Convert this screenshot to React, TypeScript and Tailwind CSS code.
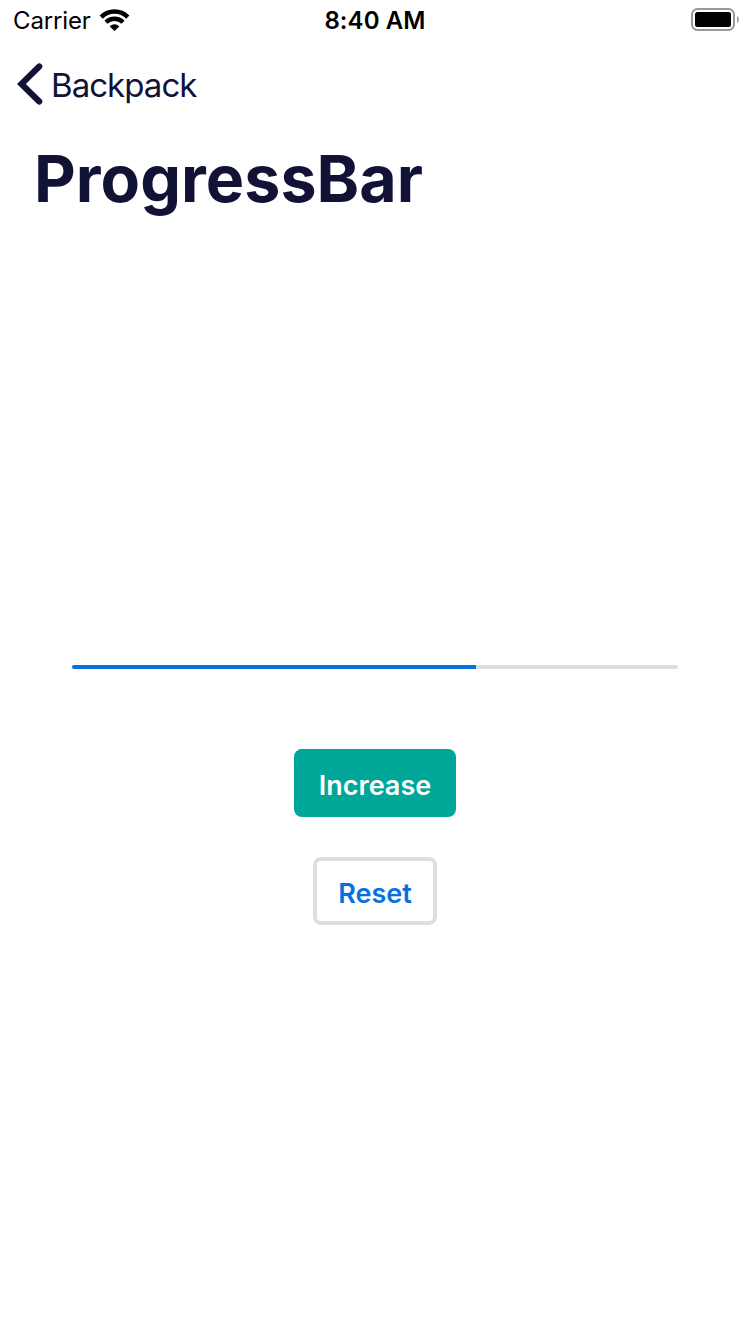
import { useState } from 'react';

function WifiIcon() {
  return (
    <svg className="ml-[8px] h-[24px] w-[32px]" viewBox="0 0 32 24" fill="none" stroke="#000">
      <path d="M2.200 9.100a18.700 18.700 0 0 1 26.600 0" strokeWidth="4.600" />
      <path d="M7 14.300a12 12 0 0 1 17 0" strokeWidth="4.400" />
      <path d="M15.500 23l-4.800-4.600a6.600 6.600 0 0 1 9.600 0z" fill="#000" stroke="none" />
    </svg>
  );
}

function BatteryIcon() {
  return (
    <svg className="h-[24px] w-[50px]" viewBox="0 0 50 24">
      <rect x="2" y="1" width="42" height="21" rx="5.500" fill="none" stroke="#999" strokeWidth="2" />
      <rect x="5" y="4" width="36" height="15" rx="2.500" fill="#000" />
      <path d="M47 8c2.400 1.200 2.400 6 0 7.200z" fill="#999" />
    </svg>
  );
}

function StatusBar() {
  return (
    <div className="grid h-10 grid-cols-3 items-center text-black">
      <div className="flex items-center pl-[13px]">
        <span className="pt-[2px] text-[24px] leading-[38px] tracking-[-0.15px]">Carrier</span>
        <WifiIcon />
      </div>
      <span className="pt-[2px] text-center text-[24px] leading-[38px] font-semibold tracking-[0.1px]">8:40 AM</span>
      <div className="flex justify-end pr-[10px]">
        <BatteryIcon />
      </div>
    </div>
  );
}

export default function App() {
  const [progress, setProgress] = useState(2);
  return (
    <div className="flex h-[1334px] w-[750px] flex-col overflow-hidden bg-white font-['Inter','Liberation_Sans',sans-serif] text-[#111236]">
      <StatusBar />
      <button className="flex h-[88px] items-center self-start pl-[17px] text-left">
        <svg className="h-[42px] w-[26px]" viewBox="0 0 26 42" fill="none">
          <path d="M22.200 3.500L4.400 21l17.800 17.500" stroke="#111236" strokeWidth="6.200" strokeLinecap="round" strokeLinejoin="miter" />
        </svg>
        <span className="ml-[8px] pt-[2px] text-[33px] leading-[86px] tracking-[-0.95px]">Backpack</span>
      </button>
      <h1 className="h-[104px] pt-px pl-[34px] text-[64.5px] leading-[100px] font-bold tracking-[0.05px]">ProgressBar</h1>
      <main className="flex flex-col items-center pt-[433px]">
        <div className="h-[4px] w-[606px] overflow-hidden rounded-full bg-[#dddde5]">
          <div className="h-full bg-[#0770e3]" style={{ width: `${(progress * 100) / 3}%` }} />
        </div>
        <button
          className="mt-20 h-[68px] w-[162px] rounded-[8px] bg-[#00a698] pt-[7px] text-[27px] font-semibold text-white"
          onClick={() => setProgress(Math.min(progress + 1, 3))}
        >
          Increase
        </button>
        <button
          className="mt-10 h-[68px] w-[124px] rounded-[8px] border-4 border-[#dddde5] pt-[7px] text-[27px] font-semibold text-[#0770e3]"
          onClick={() => setProgress(0)}
        >
          Reset
        </button>
      </main>
    </div>
  );
}
